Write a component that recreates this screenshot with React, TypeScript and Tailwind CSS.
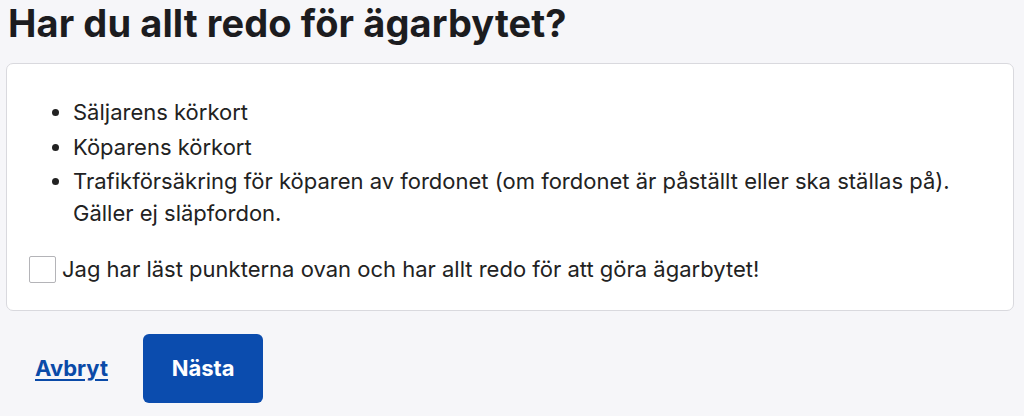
import React from "react";

export default function App() {
  return (
    <div className="w-[1024px] h-[416px] bg-[#f6f6f9] overflow-hidden text-[#1b1b1f]" style={{ fontFamily: "Inter, 'Noto Sans', sans-serif" }}>
      <h1 className="pl-[8px] text-[38px] leading-[46px] font-bold tracking-[0.1px] text-[#1c1c1f]">
        Har du allt redo för ägarbytet?
      </h1>
      <div className="ml-[6px] mt-[17px] w-[1008px] h-[248px] bg-white border border-[#d9d9de] rounded-[7px] pt-[32px]">
        <ul className="list-disc pl-[66px] text-[22px] leading-[32px] flex flex-col gap-[2.5px] text-[#222]">
          <li>Säljarens körkort</li>
          <li>Köparens körkort</li>
          <li>
            Trafikförsäkring för köparen av fordonet (om fordonet är påställt eller ska ställas på).
            <br />
            Gäller ej släpfordon.
          </li>
        </ul>
        <label className="flex items-center mt-[24px] ml-[22px] gap-[6px] text-[22px] leading-[32px] text-[#222]">
          <span className="w-[27px] h-[27px] shrink-0 border border-[#b4b4b8] bg-white rounded-[2px]" />
          <span>Jag har läst punkterna ovan och har allt redo för att göra ägarbytet!</span>
        </label>
      </div>
      <div className="flex items-center mt-[23px] ml-[35px] gap-[35px]">
        <a href="#" className="text-[22px] font-bold text-[#0a4aa8] underline underline-offset-[3px]">
          Avbryt
        </a>
        <button className="w-[120px] h-[69px] rounded-[6px] bg-[#0b4cae] text-white text-[22px] font-bold">
          Nästa
        </button>
      </div>
    </div>
  );
}
